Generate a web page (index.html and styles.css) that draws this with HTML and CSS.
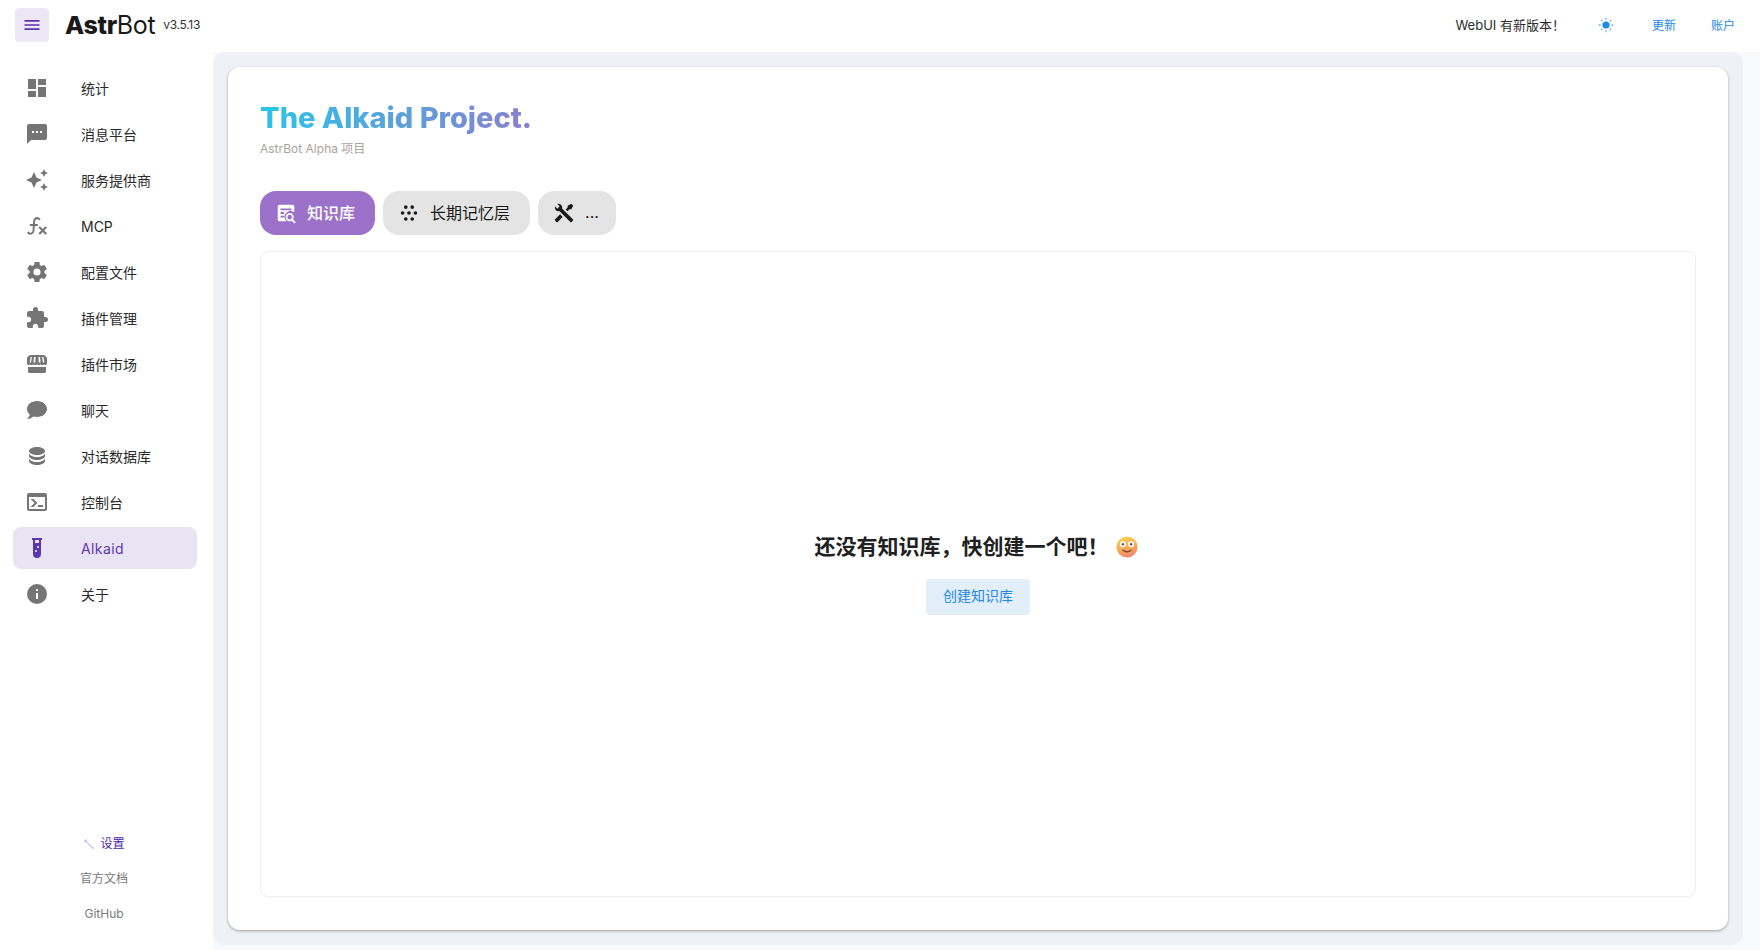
FILE: index.html
```html
<!DOCTYPE html>
<html lang="en">
<head>
    <meta charset="UTF-8">
    <meta name="viewport" content="width=device-width, initial-scale=1.0">
    <title>AstrBot</title>
    <link rel="stylesheet" href="styles.css">
</head>
<body>
    <header class="topbar">
        <button class="menu-btn">
            <svg viewBox="0 0 24 24" width="20" height="20"><path d="M3,6H21V8H3V6M3,11H21V13H3V11M3,16H21V18H3V16Z"/></svg>
        </button>
        <div class="logo"><b>Astr</b>Bot</div>
        <span class="version">v3.5.13</span>
        <div class="top-right">
            <span class="notice">WebUI 有新版本！</span>
            <svg class="sun" viewBox="0 0 24 24" width="16" height="16"><circle cx="12" cy="12" r="5.4"/><path d="M11.4 1h1.2v3h-1.2zM11.4 20h1.2v3h-1.2zM1 11.4h3v1.2H1zM20 11.4h3v1.2h-3zM4 4.9L4.9 4l2 2-.9.9zM17.1 18l.9-.9 2 2-.9.9zM4 19.1l2-2 .9.9-2 2zM17.1 6l2-2 .9.9-2 2z"/></svg>
            <a class="top-link top-link-first">更新</a>
            <a class="top-link">账户</a>
        </div>
    </header>

    <div class="layout">
        <nav class="sidebar">
            <ul class="nav-list">
                <li class="nav-item"><svg viewBox="0 0 24 24"><path d="M13,3V9H21V3M13,21H21V11H13M3,21H11V15H3M3,13H11V3H3V13Z"/></svg><span>统计</span></li>
                <li class="nav-item"><svg viewBox="0 0 24 24"><path d="M20,2H4A2,2 0 0,0 2,4V22L6,18H20A2,2 0 0,0 22,16V4C22,2.89 21.1,2 20,2M17,11H15V9H17M13,11H11V9H13M9,11H7V9H9"/></svg><span>消息平台</span></li>
                <li class="nav-item"><svg viewBox="0 0 24 24"><path d="M19,1L17.74,3.75L15,5L17.74,6.26L19,9L20.25,6.26L23,5L20.25,3.75M9,4L6.5,9.5L1,12L6.5,14.5L9,20L11.5,14.5L17,12L11.5,9.5M19,15L17.74,17.74L15,19L17.74,20.25L19,23L20.25,20.25L23,19L20.25,17.74"/></svg><span>服务提供商</span></li>
                <li class="nav-item"><svg viewBox="0 0 24 24"><path d="M12.42,5.29C11.32,5.19 10.35,6 10.25,7.11L10,10H12.82V12H9.82L9.38,17.07C9.18,19.27 7.24,20.9 5.04,20.7C3.79,20.59 2.66,19.9 2,18.83L3.5,17.33C3.83,18.38 4.95,18.97 6,18.63C6.85,18.37 7.45,17.63 7.5,16.75L7.82,12H4.82V10H8L8.28,6.76C8.47,4.56 10.41,2.94 12.61,3.13C13.86,3.24 15,3.94 15.65,5L14.15,6.5C13.91,5.83 13.24,5.35 12.42,5.29M22,13.65L20.59,12.24L17.76,15.07L14.93,12.24L13.5,13.65L16.35,16.5L13.5,19.31L14.93,20.72L17.76,17.89L20.59,20.72L22,19.31L19.17,16.5L22,13.65Z"/></svg><span>MCP</span></li>
                <li class="nav-item"><svg viewBox="0 0 24 24"><path d="M12,15.5A3.5,3.5 0 0,1 8.5,12A3.5,3.5 0 0,1 12,8.5A3.5,3.5 0 0,1 15.5,12A3.5,3.5 0 0,1 12,15.5M19.43,12.97C19.47,12.65 19.5,12.33 19.5,12C19.5,11.67 19.47,11.34 19.43,11L21.54,9.37C21.73,9.22 21.78,8.95 21.66,8.73L19.66,5.27C19.54,5.05 19.27,4.96 19.05,5.05L16.56,6.05C16.04,5.66 15.5,5.32 14.87,5.07L14.5,2.42C14.46,2.18 14.25,2 14,2H10C9.75,2 9.54,2.18 9.5,2.42L9.13,5.07C8.5,5.32 7.96,5.66 7.44,6.05L4.95,5.05C4.73,4.96 4.46,5.05 4.34,5.27L2.34,8.73C2.21,8.95 2.27,9.22 2.46,9.37L4.57,11C4.53,11.34 4.5,11.67 4.5,12C4.5,12.33 4.53,12.65 4.57,12.97L2.46,14.63C2.27,14.78 2.21,15.05 2.34,15.27L4.34,18.73C4.46,18.95 4.73,19.03 4.95,18.95L7.44,17.94C7.96,18.34 8.5,18.68 9.13,18.93L9.5,21.58C9.54,21.82 9.75,22 10,22H14C14.25,22 14.46,21.82 14.5,21.58L14.87,18.93C15.5,18.67 16.04,18.34 16.56,17.94L19.05,18.95C19.27,19.03 19.54,18.95 19.66,18.73L21.66,15.27C21.78,15.05 21.73,14.78 21.54,14.63L19.43,12.97Z"/></svg><span>配置文件</span></li>
                <li class="nav-item"><svg viewBox="0 0 24 24"><path d="M20.5,11H19V7C19,5.89 18.1,5 17,5H13V3.5A2.5,2.5 0 0,0 10.5,1A2.5,2.5 0 0,0 8,3.5V5H4A2,2 0 0,0 2,7V10.8H3.5C5,10.8 6.2,12 6.2,13.5C6.2,15 5,16.2 3.5,16.2H2V20A2,2 0 0,0 4,22H7.8V20.5C7.8,19 9,17.8 10.5,17.8C12,17.8 13.2,19 13.2,20.5V22H17A2,2 0 0,0 19,20V16H20.5A2.5,2.5 0 0,0 23,13.5A2.5,2.5 0 0,0 20.5,11Z"/></svg><span>插件管理</span></li>
                <li class="nav-item"><svg viewBox="0 0 24 24"><path d="M6 3H18C20 3 21.5 4.5 22 6.5V11.5C22 13.5 19.6 13.5 19.2 11.9C18.9 13.5 16.1 13.5 15.7 11.9C15.4 13.5 12.4 13.5 12 11.9C11.6 13.5 8.6 13.5 8.3 11.9C7.9 13.5 5.1 13.5 4.8 11.9C4.4 13.5 2 13.5 2 11.5V6.5C2.5 4.5 4 3 6 3ZM5.6 5L4.6 10.6H6L6.9 5ZM9 5L8.4 10.6H10.2L10.6 5ZM13.4 5L13.8 10.6H15.6L15 5ZM17.1 5L18 10.6H19.4L18.4 5Z" fill-rule="evenodd"/><path d="M3 15H21V19.5C21 20.3 20.3 21 19.5 21H4.5C3.7 21 3 20.3 3 19.5Z"/></svg><span>插件市场</span></li>
                <li class="nav-item"><svg viewBox="0 0 24 24"><path d="M12,3C17.5,3 22,6.58 22,11C22,15.42 17.5,19 12,19C10.76,19 9.57,18.82 8.47,18.5C5.55,21 2,21 2,21C4.33,18.67 4.7,17.1 4.75,16.5C3.05,15.07 2,13.13 2,11C2,6.58 6.5,3 12,3Z"/></svg><span>聊天</span></li>
                <li class="nav-item"><svg viewBox="0 0 24 24"><path d="M12,3C7.58,3 4,4.79 4,7C4,9.21 7.58,11 12,11C16.42,11 20,9.21 20,7C20,4.79 16.42,3 12,3M4,9V12C4,14.21 7.58,16 12,16C16.42,16 20,14.21 20,12V9C20,11.21 16.42,13 12,13C7.58,13 4,11.21 4,9M4,14V17C4,19.21 7.58,21 12,21C16.42,21 20,19.21 20,17V14C20,16.21 16.42,18 12,18C7.58,18 4,16.21 4,14Z"/></svg><span>对话数据库</span></li>
                <li class="nav-item"><svg viewBox="0 0 24 24"><path d="M20,19V7H4V19H20M20,3A2,2 0 0,1 22,5V19A2,2 0 0,1 20,21H4A2,2 0 0,1 2,19V5C2,3.89 2.9,3 4,3H20M13,17V15H18V17H13M9.58,13L5.57,9H8.4L11.7,12.3C12.09,12.69 12.09,13.33 11.7,13.72L8.42,17H5.59L9.58,13Z"/></svg><span>控制台</span></li>
                <li class="nav-item active"><svg viewBox="0 0 24 24"><path d="M7,2V4H8V18A4,4 0 0,0 12,22A4,4 0 0,0 16,18V4H17V2H7M11,16C10.4,16 10,15.6 10,15C10,14.4 10.4,14 11,14C11.6,14 12,14.4 12,15C12,15.6 11.6,16 11,16M13,12C12.4,12 12,11.6 12,11C12,10.4 12.4,10 13,10C13.6,10 14,10.4 14,11C14,11.6 13.6,12 13,12M14,7H10V4H14V7Z"/></svg><span>Alkaid</span></li>
                <li class="nav-item"><svg viewBox="0 0 24 24"><path d="M13,9H11V7H13M13,17H11V11H13M12,2A10,10 0 0,0 2,12A10,10 0 0,0 12,22A10,10 0 0,0 22,12A10,10 0 0,0 12,2Z"/></svg><span>关于</span></li>
            </ul>
            <div class="side-foot">
                <a class="foot-link foot-settings">
                    <svg viewBox="0 0 24 24" width="12" height="12"><path d="M2 6L5.5 2 8 4 8.2 7.5 20 18.5 22 19.5 21.5 22 18.5 21.5 17.5 20 6.5 9 3.5 9Z"/></svg>
                    设置
                </a>
                <a class="foot-link">官方文档</a>
                <a class="foot-link">GitHub</a>
            </div>
        </nav>

        <main class="panel">
            <section class="card">
                <h1 class="title">The Alkaid Project.</h1>
                <p class="subtitle">AstrBot Alpha 项目</p>

                <div class="tabs">
                    <button class="tab tab-on">
                        <svg viewBox="0 0 24 24" width="22" height="22"><path d="M5 3H19A2 2 0 0 1 21 5V11.2A6.5 6.5 0 0 0 11.3 19.5L12.8 21H5A2 2 0 0 1 3 19V5A2 2 0 0 1 5 3ZM6 7V9H18V7ZM6 11V13H10V11ZM6 15V17H10V15Z" fill-rule="evenodd"/><path d="M16 12A4.5 4.5 0 0 1 19.7 19L22.7 22 21.3 23.4 18.3 20.4A4.5 4.5 0 1 1 16 12ZM16 14A2.5 2.5 0 1 0 16 19 2.5 2.5 0 0 0 16 14Z" fill-rule="evenodd"/></svg>
                        <span class="tab-label">知识库</span>
                    </button>
                    <button class="tab">
                        <svg viewBox="0 0 24 24" width="22" height="22"><circle cx="8.5" cy="5.5" r="2"/><circle cx="15.5" cy="5.5" r="2"/><circle cx="5" cy="12" r="2"/><circle cx="12" cy="12" r="2"/><circle cx="19" cy="12" r="2"/><circle cx="8.5" cy="18.5" r="2"/><circle cx="15.5" cy="18.5" r="2"/></svg>
                        <span class="tab-label">长期记忆层</span>
                    </button>
                    <button class="tab tab-tools">
                        <svg viewBox="0 0 24 24" width="22" height="22"><path d="M21.71 20.29L20.29 21.71A1 1 0 0 1 18.88 21.71L7 9.85A3.81 3.81 0 0 1 6 10A4 4 0 0 1 2.22 4.7L4.76 7.24L5.29 6.71L6.71 5.29L7.24 4.76L4.7 2.22A4 4 0 0 1 10 6A3.81 3.81 0 0 1 9.85 7L21.71 18.88A1 1 0 0 1 21.71 20.29M2.29 18.88A1 1 0 0 0 2.29 20.29L3.71 21.71A1 1 0 0 0 5.12 21.71L10.59 16.25L7.76 13.42M20 2L16 4V6L13.83 8.17L15.83 10.17L18 8H20L22 4Z"/></svg>
                        <span class="tab-label">...</span>
                    </button>
                </div>

                <div class="tab-box">
                    <div class="empty-title">
                        <span>还没有知识库，快创建一个吧！</span>
                        <svg class="emoji" viewBox="0 0 24 24" width="22" height="22">
                            <defs>
                                <linearGradient id="face" x1="0.3" y1="0" x2="0.6" y2="1">
                                    <stop offset="0" stop-color="#fbd05a"/>
                                    <stop offset="0.6" stop-color="#f9a654"/>
                                    <stop offset="1" stop-color="#ef8580"/>
                                </linearGradient>
                            </defs>
                            <circle cx="12" cy="12" r="11.5" fill="url(#face)"/>
                            <circle cx="7.5" cy="9" r="3.2" fill="#fff"/>
                            <circle cx="16.5" cy="9" r="3.2" fill="#fff"/>
                            <circle cx="7.5" cy="9" r="1.3" fill="#6b4a4a"/>
                            <circle cx="16.5" cy="9" r="1.3" fill="#6b4a4a"/>
                            <path d="M7.5 15.5Q12 19 16.5 15.5" fill="none" stroke="#7a3f2c" stroke-width="1.3" stroke-linecap="round"/>
                        </svg>
                    </div>
                    <button class="create-btn">创建知识库</button>
                </div>
            </section>
        </main>
    </div>
</body>
</html>
```

FILE: styles.css
```css
* {
    box-sizing: border-box;
}
html, body {
    height: 100%;
}
body {
    margin: 0;
    height: 950px;
    overflow: hidden;
    background: #f8f9fc;
    color: #1f1f1f;
    font-family: Inter, "Noto Sans CJK SC", sans-serif;
    display: flex;
    flex-direction: column;
}
button {
    font-family: inherit;
    border: none;
    cursor: pointer;
}

/* top bar */
.topbar {
    height: 52px;
    flex: none;
    display: flex;
    align-items: center;
    background: #fff;
    padding: 0 25px 3px 15px;
}
.menu-btn {
    width: 34px;
    height: 34px;
    padding: 0;
    border-radius: 4px;
    background: #ede7f6;
    display: flex;
    align-items: center;
    justify-content: center;
}
.menu-btn svg {
    fill: #5e35b1;
}
.logo {
    margin-left: 16px;
    font-size: 25px;
    color: #1a1a1a;
    letter-spacing: -0.35px;
}
.logo b {
    font-weight: 800;
}
.version {
    margin-left: 8px;
    font-size: 12px;
    color: #333;
    letter-spacing: -0.3px;
}
.top-right {
    margin-left: auto;
    display: flex;
    align-items: center;
}
.notice {
    font-size: 13px;
    color: #2b2b2b;
}
.sun {
    margin-left: 33px;
    fill: #1e88e5;
}
.top-link {
    font-size: 12px;
    color: #1e88e5;
    margin-left: 35px;
}
.top-link-first {
    margin-left: 38px;
}

.layout {
    flex: 1;
    display: flex;
    min-height: 0;
}

/* sidebar */
.sidebar {
    width: 213px;
    flex: none;
    background: #fff;
    padding: 15px 16px 27px 13px;
    display: flex;
    flex-direction: column;
    justify-content: space-between;
}
.nav-list {
    list-style: none;
    margin: 0;
    padding: 0;
    display: flex;
    flex-direction: column;
    gap: 4px;
}
.nav-item {
    height: 42px;
    display: flex;
    align-items: center;
    padding-left: 12px;
    border-radius: 8px;
    font-size: 14px;
    color: #2a2a2a;
}
.nav-item svg {
    width: 24px;
    height: 24px;
    fill: #757575;
    flex: none;
    margin-right: 32px;
}
.nav-item.active {
    background: #e9e4f4;
    color: #5e35b1;
    letter-spacing: 0.4px;
}
.nav-item.active svg {
    fill: #5e35b1;
}
.side-foot {
    display: flex;
    flex-direction: column;
    align-items: center;
    gap: 17px;
    padding-right: 2px;
}
.foot-link {
    font-size: 12px;
    line-height: 18px;
    color: #7a7a7a;
    display: flex;
    align-items: center;
    gap: 5px;
}
.foot-settings {
    color: #4a1fa8;
}
.foot-settings svg {
    fill: #cfc4e8;
}

/* main area */
.panel {
    flex: none;
    width: 1530px;
    height: 893px;
    background: #eef2f6;
    border-radius: 12px;
    padding: 15px;
}
.card {
    height: 863px;
    background: #fff;
    border-radius: 12px;
    box-shadow: 0 1px 3px rgba(0, 0, 0, 0.35);
    padding: 31px 32px 33px;
    display: flex;
    flex-direction: column;
}
.title {
    margin: 0;
    font-size: 29px;
    line-height: 40px;
    font-weight: 800;
    width: fit-content;
    background: linear-gradient(90deg, #2bc4e8, #8a7fd0);
    -webkit-background-clip: text;
    background-clip: text;
    color: transparent;
}
.subtitle {
    margin: 2px 0 0;
    font-size: 12px;
    line-height: 18px;
    color: #a9a39e;
}
.tabs {
    margin-top: 33px;
    display: flex;
    gap: 8px;
}
.tab {
    height: 44px;
    padding: 0 20px 0 15px;
    border-radius: 16px;
    background: #e4e4e4;
    color: #1a1a1a;
    font-size: 16px;
    display: flex;
    align-items: center;
    gap: 10px;
}
.tab-label {
    margin-bottom: 2px;
}
.tab-on {
    background: #9c71c9;
    color: #fff;
    font-weight: 500;
}
.tab svg {
    fill: #1a1a1a;
}
.tab-on svg {
    fill: #fff;
}
.tab-tools {
    padding-right: 17px;
}
.tab-box {
    margin-top: 16px;
    flex: 1;
    border: 1px solid #eeeeee;
    border-radius: 8px;
    padding-bottom: 3px;
    display: flex;
    flex-direction: column;
    align-items: center;
    justify-content: center;
    gap: 16px;
}
.empty-title {
    display: flex;
    align-items: center;
    gap: 7px;
    margin-right: 4px;
    font-size: 21px;
    line-height: 32px;
    font-weight: 700;
    color: #212121;
}
.create-btn {
    width: 104px;
    height: 36px;
    padding: 0 0 3px;
    border-radius: 4px;
    background: #e3eefb;
    color: #1e88e5;
    font-size: 14px;
}
```
